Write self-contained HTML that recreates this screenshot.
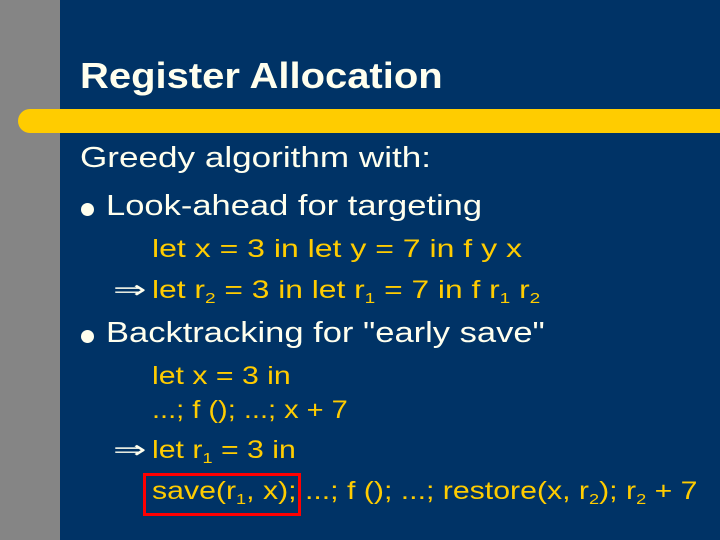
<!DOCTYPE html>
<html><head><style>
body{margin:0;width:720px;height:540px;background:#003366;position:relative;overflow:hidden;font-family:"Comic Sans MS","Liberation Sans",sans-serif}
.g{position:absolute;left:0;top:0;width:60px;height:540px;background:#858585}
.bar{position:absolute;left:18px;top:109px;width:720px;height:24px;background:#FFCC00;border-radius:12px 0 0 12px}
.t{position:absolute;white-space:nowrap;line-height:1;transform-origin:0 0}
.w{color:#FFFFEE}
.y{color:#FFCC00;font-size:25px}
sub{font-size:15px;vertical-align:-5px;line-height:0}
.dot{position:absolute;width:13px;height:13px;border-radius:50%;background:#FFFFEE}
.box{position:absolute;left:143px;top:473px;width:152px;height:37px;border:3px solid #FF0000}
</style></head><body>
<div class="g"></div>
<div class="bar"></div>
<div class="t w" style="left:80px;top:58px;font-size:36px;font-weight:bold;transform:scaleX(1.11)">Register Allocation</div>
<div class="t w" style="left:80px;top:144px;font-size:29px;transform:scaleX(1.21)">Greedy algorithm with:</div>
<div class="dot" style="left:81px;top:203px"></div>
<div class="t w" style="left:106px;top:192px;font-size:29px;transform:scaleX(1.19)">Look-ahead for targeting</div>
<div class="t y" style="left:152px;top:237px;transform:scaleX(1.28)">let x = 3 in let y = 7 in f y x</div>
<div class="t w" style="left:113px;top:278px;font-size:25px;transform:scaleX(1.6)">⇒</div>
<div class="t y" style="left:152px;top:278px;transform:scaleX(1.27)">let r<sub>2</sub> = 3 in let r<sub>1</sub> = 7 in f r<sub>1</sub> r<sub>2</sub></div>
<div class="dot" style="left:81px;top:330px"></div>
<div class="t w" style="left:106px;top:319px;font-size:29px;transform:scaleX(1.19)">Backtracking for "early save"</div>
<div class="t y" style="left:152px;top:364px;transform:scaleX(1.21)">let x = 3 in</div>
<div class="t y" style="left:152px;top:398px;transform:scaleX(1.16)">...; f (); ...; x + 7</div>
<div class="t w" style="left:113px;top:438px;font-size:25px;transform:scaleX(1.6)">⇒</div>
<div class="t y" style="left:152px;top:438px;transform:scaleX(1.21)">let r<sub>1</sub> = 3 in</div>
<div class="t y" style="left:152px;top:479px;transform:scaleX(1.21)">save(r<sub>1</sub>, x); ...; f (); ...; restore(x, r<sub>2</sub>); r<sub>2</sub> + 7</div>
<div class="box"></div>
</body></html>
